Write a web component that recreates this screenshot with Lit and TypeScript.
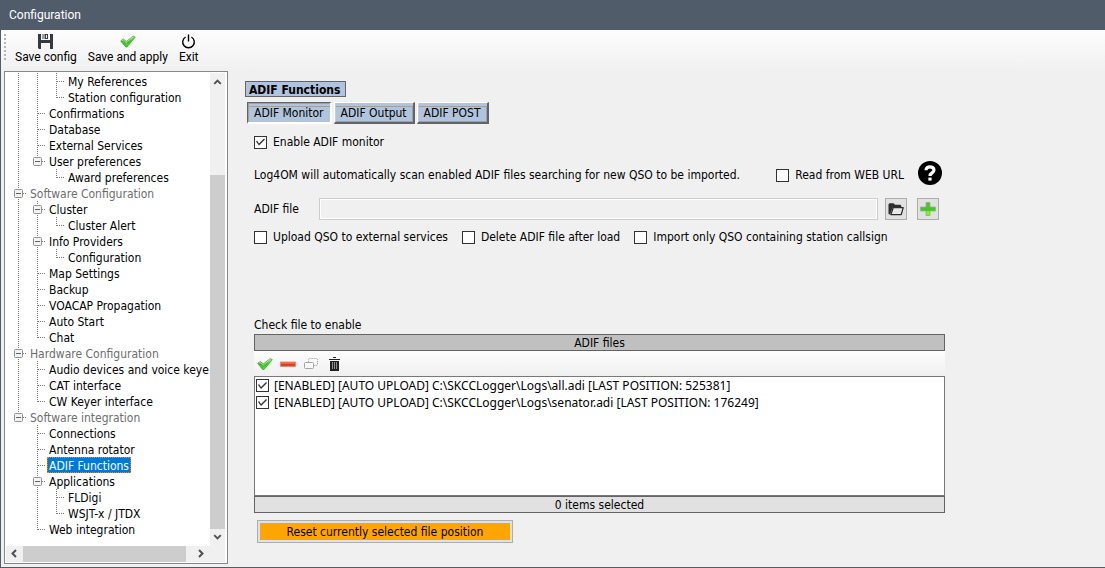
import { LitElement, html, css, svg } from "lit";
import { customElement, state } from "lit/decorators.js";
import { classMap } from "lit/directives/class-map.js";

/* Guide cells, one letter per level:
   v line through, t branch, l last branch, x toggle, e last toggle, _ empty */
interface TreeRow {
  guides: string;
  label: string;
}

const ROWS: TreeRow[] = [
  { guides: "vvt", label: "My References" },
  { guides: "vvl", label: "Station configuration" },
  { guides: "vt", label: "Confirmations" },
  { guides: "vt", label: "Database" },
  { guides: "vt", label: "External Services" },
  { guides: "ve", label: "User preferences" },
  { guides: "v_l", label: "Award preferences" },
  { guides: "x", label: "Software Configuration" },
  { guides: "vx", label: "Cluster" },
  { guides: "vvl", label: "Cluster Alert" },
  { guides: "vx", label: "Info Providers" },
  { guides: "vvl", label: "Configuration" },
  { guides: "vt", label: "Map Settings" },
  { guides: "vt", label: "Backup" },
  { guides: "vt", label: "VOACAP Propagation" },
  { guides: "vt", label: "Auto Start" },
  { guides: "vl", label: "Chat" },
  { guides: "x", label: "Hardware Configuration" },
  { guides: "vt", label: "Audio devices and voice keye" },
  { guides: "vt", label: "CAT interface" },
  { guides: "vl", label: "CW Keyer interface" },
  { guides: "e", label: "Software integration" },
  { guides: "_t", label: "Connections" },
  { guides: "_t", label: "Antenna rotator" },
  { guides: "_t", label: "ADIF Functions" },
  { guides: "_x", label: "Applications" },
  { guides: "_vt", label: "FLDigi" },
  { guides: "_vl", label: "WSJT-x / JTDX" },
  { guides: "_l", label: "Web integration" },
];

const checkIcon = html`<svg width="16" height="14" viewBox="0 0 16 14" aria-hidden="true">
  <defs>
    <linearGradient id="leaf" x1="0" y1="0" x2="0" y2="1">
      <stop offset="0" stop-color="#9be884" />
      <stop offset="0.5" stop-color="#3fbf28" />
      <stop offset="1" stop-color="#4fd42c" />
    </linearGradient>
  </defs>
  <path d="M0.7 6.4 3.4 4.5 6.3 6.9 13.2 1.6 15.3 2.6 7 12.6 5.6 12.4Z" fill="url(#leaf)" stroke="#3f9a35" stroke-width="0.7" />
  <path d="M2 6.2 3.4 5.4 6.2 8 13 2.4" fill="none" stroke="#c4f5b4" stroke-width="0.7" />
</svg>`;

@customElement("tree-pane")
export class TreePane extends LitElement {
  @state() private selected = "ADIF Functions";

  static styles = css`
    :host {
      display: grid;
      grid-template-columns: minmax(0, 1fr) 15px;
      grid-template-rows: minmax(0, 1fr) 16px;
      box-sizing: border-box;
      border: 1px solid #828790;
      padding: 1px 2px 1px 1px;
      background: #fff;
    }
    .rows {
      margin: 0;
      padding: 0 0 0 3px;
      list-style: none;
      overflow: hidden;
    }
    .row {
      display: flex;
      height: 16px;
      white-space: nowrap;
    }
    .guide {
      flex: none;
      display: block;
    }
    .label {
      flex: none;
      box-sizing: border-box;
      height: 16px;
      border: 0;
      margin: 0;
      padding: 1px 2px 0;
      background: none;
      font: inherit;
      line-height: 16px;
      color: #000;
    }
    .group {
      color: #6d6d6d;
    }
    .selected {
      background: #0078d7;
      color: #fff;
      outline: 1px dotted #e08a2c;
      outline-offset: -1px;
    }
    .bar {
      display: flex;
      background: #f0f0f0;
    }
    .vertical {
      flex-direction: column;
    }
    .arrow {
      flex: none;
      display: block;
    }
    .thumb {
      background: #cdcdcd;
    }
    .vertical .thumb {
      flex: 353;
    }
    .vertical .track {
      flex: 85;
    }
    .horizontal .thumb {
      flex: 163;
    }
    .horizontal .track {
      flex: 7;
    }
    .corner {
      background: #f0f0f0;
    }
  `;

  private guide(kind: string) {
    const toggle = kind === "x" || kind === "e";
    const bottom = kind === "l" || kind === "e" ? 9 : 16;
    return html`<svg class="guide" width="19" height="16" viewBox="0 0 19 16" aria-hidden="true">
      ${kind === "_"
        ? null
        : svg`<path d="M9.5 0V${bottom}" stroke="#7d7d7d" stroke-dasharray="1 1" />`}
      ${kind === "_" || kind === "v"
        ? null
        : svg`<path d="M10 8.5H18" stroke="#7d7d7d" stroke-dasharray="1 1" />`}
      ${toggle
        ? svg`<rect x="5.5" y="4.5" width="8" height="8" rx="1" fill="#f3f3f3" stroke="#919191" />
            <path d="M7 8.5h5" stroke="#4b63a7" />`
        : null}
    </svg>`;
  }

  private arrow(path: string, width: number, height: number) {
    return html`<svg class="arrow" width=${width} height=${height} viewBox="0 0 16 16" aria-hidden="true">
      <path d=${path} fill="none" stroke="#505050" stroke-width="2" />
    </svg>`;
  }

  render() {
    return html`
      <ul class="rows">
        ${ROWS.map(
          (row) => html`<li class="row">
            ${[...row.guides].map((kind) => this.guide(kind))}<button
              class=${classMap({
                label: true,
                group: row.guides.length === 1,
                selected: row.label === this.selected,
              })}
              @click=${() => (this.selected = row.label)}
            >${row.label}</button>
          </li>`
        )}
      </ul>
      <div class="bar vertical">
        ${this.arrow("M4.5 10.5 8 7l3.5 3.5", 15, 17)}
        <div class="track"></div>
        <div class="thumb"></div>
        ${this.arrow("M4.5 5.5 8 9l3.5-3.5", 15, 17)}
      </div>
      <div class="bar horizontal">
        ${this.arrow("M9.5 4 6 7.5 9.5 11", 17, 16)}
        <div class="thumb"></div>
        <div class="track"></div>
        ${this.arrow("M5.5 4 9 7.5l-3.5 3.5", 17, 16)}
      </div>
      <div class="corner"></div>
    `;
  }
}

@customElement("app-root")
export class AppRoot extends LitElement {
  @state() private tab = "ADIF Monitor";

  static styles = css`
    :host {
      display: flex;
      flex-direction: column;
      box-sizing: border-box;
      min-height: 100vh;
      border-left: 1px solid #515c6b;
      border-bottom: 1px solid #515c6b;
      background: #f0f0f0;
      color: #000;
      font-family: "DejaVu Sans Condensed", "DejaVu Sans", sans-serif;
      font-stretch: condensed;
      font-size: 12px;
      line-height: 16px;
    }
    .title {
      margin: 0;
      padding: 0 8px;
      background: #515c6b;
      color: #fff;
      font: 400 12px/30px Roboto, sans-serif;
    }
    .toolbar {
      display: flex;
      gap: 7px;
      height: 41px;
      padding-left: 3px;
      background: linear-gradient(#fdfdfd, #f0f0f0);
    }
    .grip {
      width: 2px;
      height: 28px;
      margin-top: 4px;
      background: repeating-linear-gradient(#b4b4b4 0 2px, transparent 2px 4px);
    }
    .tool {
      display: flex;
      flex-direction: column;
      align-items: center;
      border: 0;
      padding: 4px 2px 0;
      background: none;
      color: #000;
      font: 400 12px/16px Roboto, sans-serif;
    }
    .tool svg {
      height: 15px;
    }
    .body {
      flex: 1;
      display: flex;
      padding: 0 0 3px 3px;
    }
    .tree {
      flex: none;
      width: 224px;
    }
    .panel {
      flex: 1;
      min-width: 0;
      padding: 10px 160px 0 17px;
    }
    .heading {
      display: inline-block;
      box-sizing: border-box;
      height: 16px;
      margin: 0;
      padding: 0 5px 0 3px;
      border: 1px solid #646464;
      background: #b0c4de;
      font-size: 12px;
      font-weight: 700;
      line-height: 16px;
      vertical-align: top;
    }
    .tabs {
      display: flex;
      gap: 2px;
      padding: 5px 2px 0;
    }
    .tab {
      height: 22px;
      border: 1px solid;
      border-color: #fff #646464 #646464 #fff;
      border-width: 1px 2px 2px 1px;
      padding: 1px 6px 0;
      background: #b0c4de;
      box-shadow: inset 1px 0 #c4ccd6, inset 0 3px #b0c4de, inset 0 4px #a0a0a0, inset -1px -1px #a0a0a0;
      color: #000;
      font: inherit;
      line-height: 18px;
    }
    .tab.active {
      border-color: #646464 #fff #fff #646464;
      box-shadow: inset 1px 1px #a0a0a0, inset 0 3px #b0c4de, inset 0 4px #a0a0a0;
    }
    .content {
      padding: 10px 0 0 9px;
    }
    .line {
      display: flex;
      align-items: center;
    }
    .option {
      display: flex;
      align-items: center;
      gap: 6px;
      white-space: nowrap;
    }
    .box {
      appearance: none;
      flex: none;
      box-sizing: border-box;
      display: grid;
      place-items: center;
      width: 13px;
      height: 13px;
      margin: 0;
      border: 1px solid #333;
      background: #fff;
    }
    .box:checked::before {
      content: "";
      width: 11px;
      height: 11px;
      background: #333;
      clip-path: polygon(1px 5px, 2px 4px, 4px 7px, 9px 2px, 10px 3px, 4px 9px);
    }
    .scan {
      height: 26px;
      margin-top: 12px;
    }
    .scan .note {
      margin: 0;
      flex: 1;
      min-width: 0;
    }
    .help {
      border: 0;
      padding: 0;
      margin: 0 3px 4px 14px;
      background: none;
      height: 24px;
    }
    .file {
      height: 22px;
      margin-top: 10px;
    }
    .file label {
      flex: none;
      width: 65px;
    }
    .path {
      flex: 1;
      min-width: 0;
      box-sizing: border-box;
      height: 22px;
      border: 1px solid #ccc;
      background: #f0f0f0;
      box-shadow: inset 0 0 0 1px #fff;
      font: inherit;
    }
    .icon {
      display: grid;
      place-items: center;
      width: 22px;
      height: 22px;
      padding: 0;
      border: 1px solid #adadad;
      background: #e1e1e1;
    }
    .file .icon {
      margin-left: 7px;
    }
    .file .add {
      margin: 0 6px 0 10px;
    }
    .uploads {
      gap: 14px;
      margin-top: 9px;
    }
    .caption {
      margin: 72px 0 1px;
    }
    .strip {
      box-sizing: border-box;
      height: 17px;
      border: 1px solid #646464;
      background: #c0c0c0;
      font-size: 12px;
      font-weight: 400;
      line-height: 17px;
      margin: 0;
      text-align: center;
    }
    .footer {
      background: #e1e1e1;
    }
    .actions {
      display: flex;
      gap: 7px;
      height: 25px;
      padding-left: 3px;
      align-items: center;
      background: linear-gradient(#fdfdfd, #f0f0f0);
    }
    .action {
      display: grid;
      place-items: center;
      width: 16px;
      height: 16px;
      border: 0;
      padding: 0;
      background: none;
    }
    .files {
      box-sizing: border-box;
      min-height: 120px;
      margin: 0;
      padding: 0 1px;
      border: 1px solid #787878;
      background: #fff;
      font-family: "Noto Sans", sans-serif;
      font-stretch: normal;
      list-style: none;
    }
    .files .option {
      height: 17px;
      gap: 5px;
    }
    .reset {
      display: block;
      width: 256px;
      height: 23px;
      margin: 7px 0 0 3px;
      border: 1px solid #adadad;
      padding: 0;
      background: #ffa500;
      box-shadow: inset 0 0 0 2px #e1e1e1;
      color: #000;
      font: inherit;
    }
  `;

  private option(label: string, checked = false) {
    return html`<label class="option"><input class="box" type="checkbox" .checked=${checked} />${label}</label>`;
  }

  render() {
    return html`
      <h1 class="title">Configuration</h1>
      <div class="toolbar">
        <div class="grip"></div>
        <button class="tool">
          <svg width="15" height="15" viewBox="0 0 15 15" aria-hidden="true">
            <path d="M0 0h15v15H1L0 14Z" fill="#333a40" />
            <path d="M3 0h9v6H3zM3 9h9v6H3z" fill="#f5f5f5" />
            <path d="M4 0h6v5H4z" fill="#9aa0a4" />
            <path d="M7 0h3v5H7z" fill="#333a40" />
            <path d="M8 1h1v3H8z" fill="#fff" />
          </svg>
          Save config
        </button>
        <button class="tool">${checkIcon}Save and apply</button>
        <button class="tool">
          <svg width="15" height="15" viewBox="0 0 15 15" aria-hidden="true">
            <path d="M4.6 3A5.8 5.8 0 1 0 10.4 3M7.5 0.5V7.5" fill="none" stroke="#000" stroke-width="1.4" />
          </svg>
          Exit
        </button>
      </div>
      <div class="body">
        <tree-pane class="tree"></tree-pane>
        <main class="panel">
          <h2 class="heading">ADIF Functions</h2>
          <div class="tabs">
            ${["ADIF Monitor", "ADIF Output", "ADIF POST"].map(
              (name) => html`<button
                class=${classMap({ tab: true, active: name === this.tab })}
                @click=${() => (this.tab = name)}
              >${name}</button>`
            )}
          </div>
          <div class="content">
            ${this.option("Enable ADIF monitor", true)}
            <div class="line scan">
              <p class="note">Log4OM will automatically scan enabled ADIF files searching for new QSO to be imported.</p>
              ${this.option("Read from WEB URL")}
              <button class="help" aria-label="Help">
                <svg width="24" height="24" viewBox="0 0 24 24" aria-hidden="true">
                  <circle cx="12" cy="12" r="12" fill="#000" />
                  <path d="M8 9.2C8 4.6 16 4.8 16 9c0 3-4 2.8-4 6" fill="none" stroke="#fff" stroke-width="3.2" />
                  <rect x="10.4" y="16.6" width="3.2" height="3" fill="#fff" />
                </svg>
              </button>
            </div>
            <div class="line file">
              <label for="path">ADIF file</label>
              <input id="path" class="path" type="text" readonly />
              <button class="icon" aria-label="Browse">
                <svg width="16" height="14" viewBox="0 0 16 14" aria-hidden="true">
                  <path d="M0.5 12V2.2L1.5 1.2H5.6L7 2.8H12.4L13.4 4V5.4H4.8L2 12.5Z" fill="#2d2d2d" />
                  <path d="M5.3 5.6H15.2L13.2 12.6H2.8Z" fill="#e8e8e8" stroke="#2d2d2d" stroke-width="1.3" stroke-linejoin="round" />
                </svg>
              </button>
              <button class="icon add" aria-label="Add">
                <svg width="16" height="14" viewBox="0 0 16 14" aria-hidden="true">
                  <path d="M6 0.5h4v4.5h5.5v4h-5.5v4.5h-4V9H0.500V5h5.500Z" fill="#4cc32c" stroke="#8fb585" stroke-width="0.8" />
                  <path d="M6.500 9h3v4h-3z" fill="#8df02c" />
                </svg>
              </button>
            </div>
            <div class="line uploads">
              ${this.option("Upload QSO to external services")}
              ${this.option("Delete ADIF file after load")}
              ${this.option("Import only QSO containing station callsign")}
            </div>
            <p class="caption">Check file to enable</p>
            <h3 class="strip">ADIF files</h3>
            <div class="actions">
              <button class="action" aria-label="Enable">${checkIcon}</button>
              <button class="action" aria-label="Remove">
                <svg width="16" height="14" viewBox="0 0 16 14" aria-hidden="true">
                  <rect x="0.5" y="5" width="15" height="4.5" fill="#e2401c" stroke="#d88a78" stroke-width="0.8" />
                  <path d="M1 6h14" stroke="#f58a5c" />
                </svg>
              </button>
              <button class="action" aria-label="Duplicate">
                <svg width="16" height="14" viewBox="0 0 16 14" aria-hidden="true">
                  <rect x="5.500" y="1.500" width="9" height="7" rx="1" fill="none" stroke="#999" stroke-dasharray="1 1" />
                  <rect x="1.500" y="5.500" width="9" height="6" rx="1" fill="#f8f8f8" stroke="#a4a4a4" />
                </svg>
              </button>
              <button class="action" aria-label="Delete">
                <svg width="16" height="16" viewBox="0 0 16 16" aria-hidden="true">
                  <path d="M3 3.500h11M7 1.500h3" stroke="#222" />
                  <path d="M4 5h9v10H4z" fill="#222" />
                  <path d="M6.500 6v7M8.500 6v7M10.500 6v7" stroke="#aaa" stroke-width="0.8" />
                </svg>
              </button>
            </div>
            <ul class="files">
              <li>${this.option("[ENABLED] [AUTO UPLOAD] C:\\SKCCLogger\\Logs\\all.adi [LAST POSITION: 525381]", true)}</li>
              <li>${this.option("[ENABLED] [AUTO UPLOAD] C:\\SKCCLogger\\Logs\\senator.adi [LAST POSITION: 176249]", true)}</li>
            </ul>
            <div class="strip footer">0 items selected</div>
            <button class="reset">Reset currently selected file position</button>
          </div>
        </main>
      </div>
    `;
  }
}
